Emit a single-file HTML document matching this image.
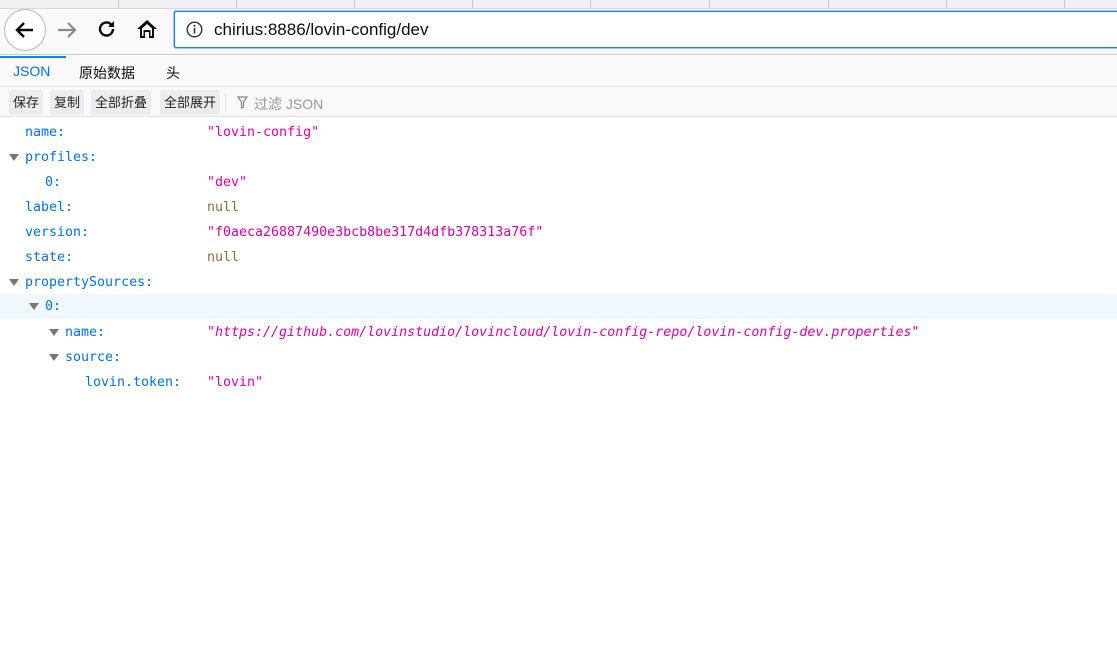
<!DOCTYPE html>
<html><head><meta charset="utf-8"><style>
*{margin:0;padding:0;box-sizing:border-box}
body{width:1117px;height:672px;background:#fff;position:relative;overflow:hidden;font-family:"Liberation Sans","Noto Sans CJK SC",sans-serif}
.a{position:absolute}
.top{left:0;top:0;width:1117px;height:9px;background:#f0f0f4;border-bottom:1px solid #d8d8dc}
.sep{top:0;width:1px;height:8px;background:#c8c8cc}
.nav{left:0;top:9px;width:1117px;height:46px;background:#f9f9fa;border-bottom:1px solid #c8c8c8}
.url{left:174px;top:11px;width:950px;height:37px;border:1px solid #0a84ff;border-radius:2px;background:#fff;box-shadow:0 0 0 1px #a0c8f5}
.tabs{left:0;top:56px;width:1117px;height:31px;background:#f9f9fa;border-bottom:1px solid #e0e0e2;font-size:14px}
.tb{left:0;top:87px;width:1117px;height:30px;background:#f9f9fa;border-bottom:1px solid #e0e0e2;font-size:13px}
.btn{top:3px;height:25px;background:#ececee;border-radius:2px;line-height:25px;padding:0 4px;color:#222}
.row{left:0;height:25px;line-height:25px;font-family:"DejaVu Sans Mono","Liberation Mono",monospace;font-size:13.3px;width:1117px;white-space:pre}
.k{color:#0074e8}.s{color:#dd00a9}.n{color:#8a6f3e}
.tri{position:absolute;width:0;height:0;border-left:5px solid transparent;border-right:5px solid transparent;border-top:7px solid #777;top:9px}
</style></head><body>
<div class="a top"></div>
<div class="a sep" style="left:118px"></div><div class="a sep" style="left:236px"></div><div class="a sep" style="left:354px"></div><div class="a sep" style="left:472px"></div><div class="a sep" style="left:590px"></div><div class="a sep" style="left:709px"></div><div class="a sep" style="left:828px"></div><div class="a sep" style="left:946px"></div><div class="a sep" style="left:1064px"></div>
<div class="a nav"></div>
<div class="a" style="left:4px;top:9px;width:42px;height:42px;border:1px solid #b8b8b8;border-radius:50%;background:#fff"></div>
<svg class="a" style="left:13px;top:18px" width="24" height="24" viewBox="0 0 24 24"><path d="M20 12H5M11 5l-7 7 7 7" stroke="#0c0c0d" stroke-width="2.4" fill="none"/></svg>
<svg class="a" style="left:55px;top:18px" width="24" height="24" viewBox="0 0 24 24"><path d="M3 12h16M13 5l7 7-7 7" stroke="#8a8a8a" stroke-width="2.2" fill="none"/></svg>
<svg class="a" style="left:96px;top:18px" width="22" height="22" viewBox="0 0 22 22"><path d="M17 11a6.5 6.5 0 1 1-2-4.7" stroke="#0c0c0d" stroke-width="2.4" fill="none"/><path d="M18 3v6h-6z" fill="#0c0c0d"/></svg>
<svg class="a" style="left:135px;top:17px" width="24" height="24" viewBox="0 0 24 24"><path d="M12 3L2 12h3v9h5v-6h4v6h5v-9h3z" fill="#0c0c0d"/><path d="M12 7l-5 4.5V19h1.5v-6h7v6H17v-7.5z" fill="#fff"/></svg>
<div class="a url"></div>
<svg class="a" style="left:186px;top:21px" width="17" height="17" viewBox="0 0 17 17"><circle cx="8.5" cy="8.5" r="7.3" stroke="#333" stroke-width="1.4" fill="none"/><path d="M8.5 7v5.5" stroke="#333" stroke-width="1.6"/><circle cx="8.5" cy="4.8" r="1" fill="#333"/></svg>
<div class="a" style="left:214px;top:20px;font-size:17px;color:#0c0c0d">chirius:8886/lovin-config/dev</div>
<div class="a tabs"></div>
<div class="a" style="left:0;top:56px;width:66px;height:2px;background:#0a84ff"></div>
<div class="a" style="left:13px;top:63px;font-size:14px;color:#0074e8">JSON</div>
<div class="a" style="left:79px;top:63px;font-size:14px;color:#0c0c0d">原始数据</div>
<div class="a" style="left:166px;top:63px;font-size:14px;color:#0c0c0d">头</div>
<div class="a tb">
<div class="a btn" style="left:9px">保存</div>
<div class="a btn" style="left:50px">复制</div>
<div class="a btn" style="left:91px">全部折叠</div>
<div class="a btn" style="left:160px">全部展开</div>
<div class="a" style="left:225px;top:6px;width:1px;height:19px;background:#ddd"></div>
<svg class="a" style="left:237px;top:9px" width="11" height="13" viewBox="0 0 11 13"><path d="M1 1h9L6.5 6v5l-2 1V6z" fill="none" stroke="#888" stroke-width="1.2"/></svg>
<div class="a" style="left:254px;top:7px;color:#999;font-size:14px">过滤 JSON</div>
</div>
<div class="a row" style="top:120px"><span class="a k" style="left:25px">name:</span><span class="a s" style="left:207px">"lovin-config"</span></div>
<div class="a row" style="top:145px"><i class="tri" style="left:9px"></i><span class="a k" style="left:25px">profiles:</span></div>
<div class="a row" style="top:170px"><span class="a k" style="left:45px">0:</span><span class="a s" style="left:207px">"dev"</span></div>
<div class="a row" style="top:195px"><span class="a k" style="left:25px">label:</span><span class="a n" style="left:207px">null</span></div>
<div class="a row" style="top:220px"><span class="a k" style="left:25px">version:</span><span class="a s" style="left:207px">"f0aeca26887490e3bcb8be317d4dfb378313a76f"</span></div>
<div class="a row" style="top:245px"><span class="a k" style="left:25px">state:</span><span class="a n" style="left:207px">null</span></div>
<div class="a row" style="top:270px"><i class="tri" style="left:9px"></i><span class="a k" style="left:25px">propertySources:</span></div>
<div class="a row" style="top:294px;background:#f0f8fd"><i class="tri" style="left:29px"></i><span class="a k" style="left:45px">0:</span></div>
<div class="a row" style="top:320px"><i class="tri" style="left:49px"></i><span class="a k" style="left:65px">name:</span><span class="a s" style="left:207px"><i>"https://github.com/lovinstudio/lovincloud/lovin-config-repo/lovin-config-dev.properties"</i></span></div>
<div class="a row" style="top:345px"><i class="tri" style="left:49px"></i><span class="a k" style="left:65px">source:</span></div>
<div class="a row" style="top:370px"><span class="a k" style="left:85px">lovin.token:</span><span class="a s" style="left:207px">"lovin"</span></div>
</body></html>
